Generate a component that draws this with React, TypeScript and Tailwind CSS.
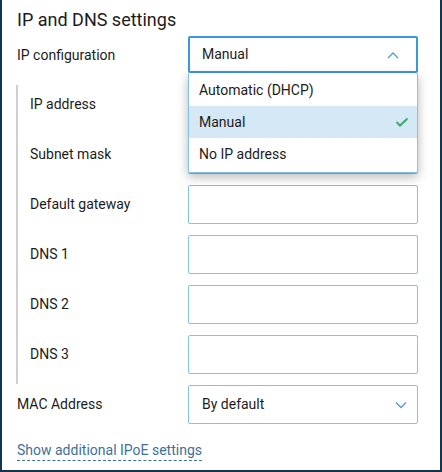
import React from "react";

const font = { fontFamily: "Roboto, 'Noto Sans', sans-serif" };

function Chevron({ up }: { up?: boolean }) {
  return (
    <svg width="12" height="8" viewBox="0 0 12 8" className="shrink-0">
      <path
        d={up ? "M1 7 L6 2 L11 7" : "M1 1.5 L6 6.5 L11 1.5"}
        fill="none"
        stroke="#5b9bd1"
        strokeWidth="1.4"
      />
    </svg>
  );
}

function Row({ label, children }: { label: string; children?: React.ReactNode }) {
  return (
    <div className="flex items-center h-[39px]">
      <div className="w-[170px] pl-[12px] text-[14px] text-[#1c1c1c]">{label}</div>
      {children}
    </div>
  );
}

function Input() {
  return <div className="w-[230px] h-[39px] border border-[#85c0ea] rounded-[2px] bg-white" />;
}

export default function App() {
  return (
    <div
      className="w-[442px] h-[472px] bg-white border-x-2 border-b-2 border-[#12344d] pl-[15px] pt-[2px] relative overflow-hidden"
      style={font}
    >
      <div className="h-[34px] flex items-center text-[18px] text-[#1c1c1c]">IP and DNS settings</div>

      <div className="relative">
        <div className="flex items-center h-[37px]">
          <div className="w-[171px] pt-[1px] text-[14px] text-[#1c1c1c]">IP configuration</div>
          <div className="w-[230px] h-[37px] border-2 border-[#3a98dd] rounded-[2px] flex items-center justify-between pl-[12px] pr-[17px] text-[14px] text-[#1c1c1c]">
            <span>Manual</span>
            <Chevron up />
          </div>
        </div>
        <div className="absolute left-[171px] top-[37px] w-[230px] bg-white border border-t-0 border-[#85c0ea] shadow-[0_4px_10px_rgba(0,0,0,0.28)] z-10 pt-[1px] pb-[2px] text-[14px] text-[#1c1c1c]">
          <div className="h-[32px] flex items-center pl-[10px]">Automatic (DHCP)</div>
          <div className="h-[32px] flex items-center justify-between pl-[10px] pr-[8px] bg-[#d5e8f5]">
            <span>Manual</span>
            <svg width="14" height="10" viewBox="0 0 14 10">
              <path d="M1.5 5 L5 8.5 L12.5 1.5" fill="none" stroke="#3daa6a" strokeWidth="2" />
            </svg>
          </div>
          <div className="h-[32px] flex items-center pl-[10px]">No IP address</div>
        </div>
      </div>

      <div className="mt-[12px] border-l-2 border-[#cfcfcf] -ml-[1px] pb-[10px] flex flex-col gap-[11px]">
        <Row label="IP address">
          <Input />
        </Row>
        <Row label="Subnet mask">
          <Input />
        </Row>
        <Row label="Default gateway">
          <Input />
        </Row>
        <Row label="DNS 1">
          <Input />
        </Row>
        <Row label="DNS 2">
          <Input />
        </Row>
        <Row label="DNS 3">
          <Input />
        </Row>
      </div>

      <div className="mt-[1px] flex items-center h-[39px]">
        <div className="w-[171px] text-[14px] text-[#1c1c1c]">MAC Address</div>
        <div className="w-[230px] h-[39px] border border-[#85c0ea] rounded-[2px] flex items-center justify-between pl-[13px] pr-[10px] text-[14px] text-[#1c1c1c]">
          <span>By default</span>
          <Chevron />
        </div>
      </div>

      <div className="mt-[16px] text-[14px]">
        <span className="text-[#3f6f98] border-b border-dashed border-[#3f6f98] leading-[18px] inline-block pb-[1px]">
          Show additional IPoE settings
        </span>
      </div>
    </div>
  );
}
